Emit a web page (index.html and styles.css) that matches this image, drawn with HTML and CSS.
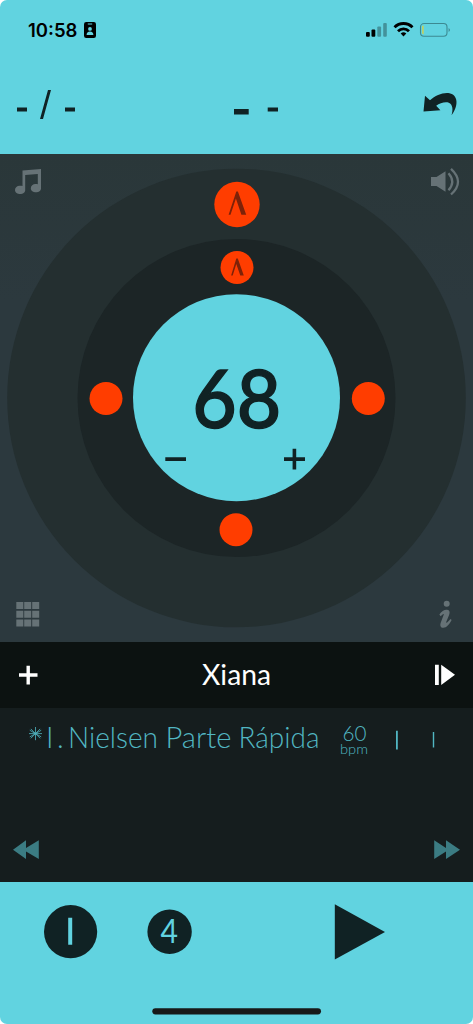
FILE: index.html
```html
<!DOCTYPE html>
<html lang="es">
<head>
<meta charset="utf-8">
<title>Metronome</title>
<link rel="stylesheet" href="styles.css">
</head>
<body>
<main class="app">
  <header class="top">
    <div class="status">
      <span class="time">10:58</span>
      <svg class="badge" width="12" height="16" viewBox="0 0 12 16"><rect width="12" height="16" rx="2.2"/><path class="cut" d="M3.8 1.5h4.4v1H3.8zM6 5a1.9 1.9 0 1 1 0 3.8A1.9 1.9 0 0 1 6 5zM2.6 13c0-2 1.2-3.4 3.4-3.4S9.4 11 9.4 13z"/></svg>
      <svg class="signals" width="86" height="16" viewBox="0 0 86 16">
        <rect x="0" y="10" width="3.8" height="4.8" rx="1"/><rect x="5.5" y="7.5" width="3.8" height="7.3" rx="1"/>
        <g opacity=".3"><rect x="11.3" y="4.5" width="3.8" height="10.3" rx="1"/><rect x="17.2" y="1" width="3.6" height="13.8" rx="1"/></g>
        <g fill="none" stroke="#000" stroke-width="2.8"><path d="M28.5 5.300a12.600 12.600 0 0 1 18 0M32 9.200a7.800 7.800 0 0 1 11 0"/></g>
        <path d="M34.700 11.500a4.200 4.200 0 0 1 5.600 0l-2.800 3z"/>
        <rect x="54.500" y="1.500" width="26.500" height="12.800" rx="3.500" fill="none" stroke="#3c8991" stroke-width="1.100"/>
        <path d="M56.300 4.600q0-1 1.200-1v8.600q-1.200 0-1.200-1z" fill="#e5cf31"/>
        <path d="M82.600 5.900q2.700 1.900 0 4z" fill="#3c8991"/>
      </svg>
    </div>
    <div class="counters">
      <svg width="473" height="60" viewBox="0 80 473 60" fill="#102224">
        <path d="M17 107.500h10v4H17zM65 107.500h10v4H65zM48 90h3l-8 29h-3zM234 109h14.700v5.500H234zM267.700 107.500H278v4h-10.300z"/>
        <path d="M425 95.700l5 4.600c5.500-5 13-8 19.500-7 8.500 1.500 9.500 12.700 2 21.900 1.800-5.500 1.200-11-2.700-12.500-3.500-1.300-9 .3-12.600 3.100l4.200 4.400-16.900 1.400z"/>
      </svg>
    </div>
  </header>

  <section class="dial">
    <svg width="473" height="488" viewBox="0 154 473 488">
      <circle cx="236.500" cy="398" r="229.300" fill="#242f30"/>
      <circle cx="236.500" cy="398" r="159" fill="#1c2526"/>
      <circle cx="236.500" cy="397.700" r="103.500" fill="#61d3e0"/>
      <g fill="#ff3d00">
        <circle cx="237" cy="204.500" r="22.700"/><circle cx="237" cy="267.500" r="16.500"/>
        <circle cx="106" cy="398.500" r="16.500"/><circle cx="368.300" cy="398.500" r="16.500"/><circle cx="236" cy="529.700" r="16.500"/>
      </g>
      <g fill="#7d2208">
        <path d="M228.600 214.700L236.300 191.500h1.600l8.300 23.200h-4.800L235.900 198.500l-5.400 16.200z"/>
        <path d="M231.100 275.500l5.200-17h1.500l6 17h-3.500l-4-11.500-3.600 11.500z"/>
      </g>
      <text class="bpm" x="192.300" y="427.800" textLength="89" lengthAdjust="spacingAndGlyphs">68</text>
      <path fill="#102224" d="M165.300 457.300H186v3.700h-20.700zM284 457.300h8.600v-8.600h3.600v8.600h8.800v3.700h-8.800v8.600h-3.600V461H284z"/>
      <g fill="#667276">
        <path d="M22.500 170.500L41 169v19.500c0 2.200-2.300 3.800-5 3.800s-5.200-1.500-5.200-4.100 2.500-4.500 5.200-4.200c1 0 1.400.1 1.800.3v-10.300l-12.600 1v15.200c0 2.200-2.400 3.800-5 3.800s-5.200-1.500-5.200-4.100 2.400-4.400 5-4.200c1 0 1.700.1 2.500.4z"/>
        <path d="M431 177h5.500l9-5.800v20.600l-9-5.800H431z"/>
        <g fill="none" stroke="#667276" stroke-width="2.300"><path d="M448.500 173.300q7.500 8.500 0 17M451 168.800q14 13 0 25.700"/></g>
        <path d="M16.300 602h7v7h-7zM24.200 602h7v7h-7zM32.200 602h7v7h-7zM16.300 610.800h7v7h-7zM24.200 610.800h7v7h-7zM32.200 610.800h7v7h-7zM16.300 619.500h7v7h-7zM24.200 619.500h7v7h-7zM32.200 619.500h7v7h-7z"/>
        <circle cx="446.700" cy="603.800" r="3"/>
        <path d="M439.400 614.500c2.200-3.500 5.200-5.100 7.800-4.700 2.500.4 3 2.400 1.900 5.200l-2.800 6.800c-.4 1 .1 1.200.8.700l3.500-3.400 1 .9c-2.500 4.600-5 7.700-8.200 7.800-3.300 0-3.500-3-2.600-5.400l2.900-7.600c.3-.9-.2-1.100-.8-.6l-2.300 2z"/>
      </g>
    </svg>
  </section>

  <section class="bar">
    <svg width="473" height="66" viewBox="0 642 473 66" fill="#fff">
      <path d="M19 673.300h7.500v-7.600h3.400v7.600h7.600v3.500h-7.600v7.600h-3.400v-7.600H19zM435 664.700h3.800v20.300H435zM441.200 664.700L455 674.800 441.200 685z"/>
      <text class="title" x="202" y="685.200" textLength="69" lengthAdjust="spacingAndGlyphs">Xiana</text>
    </svg>
  </section>

  <section class="songs">
    <svg width="473" height="174" viewBox="0 708 473 174">
      <path d="M35.500 727v13.200M29.800 730.300l11.400 6.600M41.200 730.300l-11.400 6.600M30.800 728.900l9.400 9.400M40.200 728.900l-9.400 9.400M29 733.600h13" stroke="#51b6c2" stroke-width=".8"/>
      <text class="song" x="46" y="748">I</text>
      <text class="song" x="57" y="748">.</text>
      <text class="song" x="68" y="748" textLength="90" lengthAdjust="spacingAndGlyphs">Nielsen</text>
      <text class="song" x="165.500" y="748" textLength="66" lengthAdjust="spacingAndGlyphs">Parte</text>
      <text class="song" x="238.500" y="748" textLength="81" lengthAdjust="spacingAndGlyphs">Rápida</text>
      <text class="tempo" x="342.500" y="741.300" textLength="24" lengthAdjust="spacingAndGlyphs">60</text>
      <text class="unit" x="340" y="754.300" textLength="28" lengthAdjust="spacingAndGlyphs">bpm</text>
      <path d="M396 730.700h1.800v18.800H396zM432.800 732h1.400v15.500h-1.400z" fill="#51b6c2"/>
      <path d="M13 849.800l13-9.600v7.800l12.800-7.800V859L26 851.500v7.500zM460 849.800l-14-9.600v7.800l-11.800-7.800V859l11.800-7.500v7.500z" fill="#3b7c83"/>
    </svg>
  </section>

  <footer class="controls">
    <svg width="473" height="142" viewBox="0 882 473 142" fill="#102224">
      <circle cx="70.600" cy="931.700" r="26.600"/>
      <circle cx="169.600" cy="931.700" r="22.200"/>
      <path fill="#61d3e0" d="M68.200 917.700h4v27h-4z"/>
      <text class="beats" x="160.500" y="942.800" textLength="17.500" lengthAdjust="spacingAndGlyphs">4</text>
      <path d="M334.800 904.300L385 932l-50.200 27.500z"/>
      <rect x="152.300" y="1008.200" width="168.700" height="6.200" rx="3.100" fill="#171918"/>
    </svg>
  </footer>
</main>
</body>
</html>
```
FILE: styles.css
```css
body {
  margin: 0;
  background: #fff;
}

.app {
  width: 473px;
  height: 1024px;
  display: flex;
  flex-direction: column;
  overflow: hidden;
  border-radius: 7px;
  background: #61d3e0;
  font-family: Lato, sans-serif;
}

.app svg {
  display: block;
}

.top {
  height: 154px;
}

.status {
  display: flex;
  align-items: center;
  height: 16px;
  padding: 22px 21px 0 28px;
}

.time {
  width: 50px;
  font: 600 18.5px/16px Inter, sans-serif;
  letter-spacing: 0;
}

.badge {
  margin-left: 6px;
}

.cut {
  fill: #61d3e0;
}

.signals {
  margin-left: auto;
}

.counters {
  padding-top: 42px;
}

.dial {
  height: 488px;
  background: linear-gradient(#2a3739, #2c393e 30%, #2c393e);
}

.bar {
  height: 66px;
  background: #0c1211;
}

.songs {
  height: 174px;
  background: #151d1e;
}

.controls {
  height: 142px;
}

.bpm {
  font-size: 82px;
  font-weight: 500;
  fill: #102224;
  stroke: #102224;
  stroke-width: 1.4;
}

.title {
  font-size: 28px;
}

.song,
.tempo,
.unit {
  font-size: 28.5px;
  font-weight: 300;
  fill: #51b6c2;
}

.tempo {
  font-size: 21.5px;
}

.unit {
  font-size: 13px;
}

.beats {
  font-size: 32px;
  fill: #61d3e0;
}
```
